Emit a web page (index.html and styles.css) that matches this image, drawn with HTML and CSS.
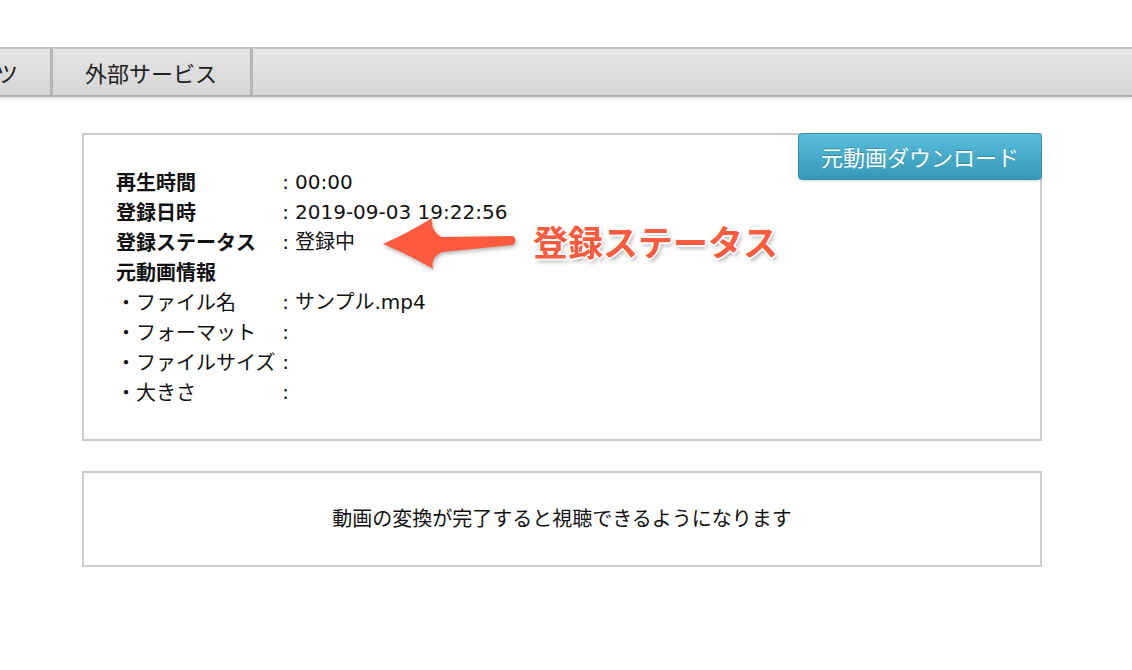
FILE: index.html
```html
<!DOCTYPE html>
<html lang="ja">
<head>
    <meta charset="UTF-8">
    <meta name="viewport" content="width=device-width, initial-scale=1.0">
    <title>動画詳細</title>
    <link rel="stylesheet" href="styles.css">
</head>
<body>
    <nav class="tabs">
        <ul class="tab-list">
            <li class="tab">コンテンツ</li>
            <li class="tab">外部サービス</li>
        </ul>
    </nav>

    <main class="content">
        <section class="panel info-panel">
            <button class="btn-download">元動画ダウンロード</button>

            <dl class="info-list">
                <dt class="label">再生時間</dt>
                <dd class="value"><span class="colon">:</span>00:00</dd>
                <dt class="label">登録日時</dt>
                <dd class="value"><span class="colon">:</span>2019-09-03 19:22:56</dd>
                <dt class="label">登録ステータス</dt>
                <dd class="value"><span class="colon">:</span>登録中</dd>
                <dt class="label">元動画情報</dt>
                <dd class="value"></dd>
                <dt class="label sub">・ファイル名</dt>
                <dd class="value"><span class="colon">:</span>サンプル.mp4</dd>
                <dt class="label sub">・フォーマット</dt>
                <dd class="value"><span class="colon">:</span></dd>
                <dt class="label sub">・ファイルサイズ</dt>
                <dd class="value"><span class="colon">:</span></dd>
                <dt class="label sub">・大きさ</dt>
                <dd class="value"><span class="colon">:</span></dd>
            </dl>

            <!-- annotation -->
            <svg class="note-arrow" width="160" height="70" viewBox="0 0 160 70">
                <path d="M13,34 Q40,22 62,8 Q60,20 71,27 L143,26 Q148,30 143,35 L72,42 Q60,48 63,59 Q40,45 13,34 Z" fill="#fd5a3e"/>
            </svg>
            <span class="note-text">登録ステータス</span>
        </section>

        <section class="panel message-panel">
            <p>動画の変換が完了すると視聴できるようになります</p>
        </section>
    </main>
</body>
</html>
```

FILE: styles.css
```css
* {
    margin: 0;
    padding: 0;
    box-sizing: border-box;
}

:root {
    --text-color: #111;
    --border-color: #cccccc;
    --tab-border: #b6b6b6;
    --note-color: #fd5a3e;
}

body {
    background-color: white;
    color: var(--text-color);
    font-family: "DejaVu Sans", "Noto Sans CJK JP", sans-serif;
    overflow: hidden;
}

/* tabs */
.tabs {
    margin-top: 47px;
    border-top: 2px solid #c2c2c2;
    border-bottom: 2px solid #b0b0b0;
    background: linear-gradient(#e6e6e6, #d7d7d7);
    box-shadow: 0 2px 3px rgba(0,0,0,0.12);
}

.tab-list {
    list-style: none;
    display: flex;
    margin-left: -124px;
}

.tab {
    padding: 0 32px 0 32px;
    line-height: 46px;
    font-size: 22px;
    color: #222;
    font-family: "Noto Sans CJK JP", sans-serif;
    border-right: 3px solid var(--tab-border);
    background: linear-gradient(#e4e4e4, #d6d6d6);
}

.tab:last-child {
    padding-right: 33px;
}

/* panels */
.content {
    margin-left: 82px;
    width: 960px;
    padding-top: 36px;
}

.panel {
    border: 2px solid var(--border-color);
    position: relative;
}

.info-panel {
    padding: 32px 32px;
}

.info-list {
    display: grid;
    grid-template-columns: 160px 1fr;
    font-size: 20px;
    line-height: 30px;
}

.label {
    font-weight: bold;
    font-family: "Noto Sans CJK JP", sans-serif;
}

.label.sub {
    font-weight: normal;
}

.value {
    white-space: nowrap;
}

.colon {
    display: inline-block;
    width: 19px;
    text-align: center;
}

.btn-download {
    position: absolute;
    top: -2px;
    right: -2px;
    height: 47px;
    padding: 0 22px 2px;
    font-size: 22px;
    font-family: "Noto Sans CJK JP", sans-serif;
    color: white;
    text-shadow: 0 -1px 0 rgba(0,0,0,0.2);
    background: linear-gradient(#58bfdc, #3598b6);
    border: 1px solid #3391ae;
    border-radius: 4px;
    box-shadow: 0 1px 2px rgba(0,0,0,0.15);
    cursor: pointer;
}

.note-arrow {
    position: absolute;
    left: 286px;
    top: 75px;
    filter: drop-shadow(1px 2px 2px rgba(0,0,0,0.3));
}

.note-text {
    position: absolute;
    left: 449px;
    top: 88px;
    font-size: 35px;
    line-height: 1;
    font-weight: bold;
    font-family: "Noto Sans CJK JP", sans-serif;
    color: var(--note-color);
    white-space: nowrap;
    text-shadow:
        -2px 0 0 #fff, 2px 0 0 #fff, 0 -2px 0 #fff, 0 2px 0 #fff,
        -1px -1px 0 #fff, 1px 1px 0 #fff, -1px 1px 0 #fff, 1px -1px 0 #fff,
        2px 3px 4px rgba(0,0,0,0.35);
}

.message-panel {
    margin-top: 30px;
    padding: 30px 30px 32px;
    text-align: center;
    font-size: 20px;
    line-height: 30px;
    font-family: "Noto Sans CJK JP", sans-serif;
}
```
